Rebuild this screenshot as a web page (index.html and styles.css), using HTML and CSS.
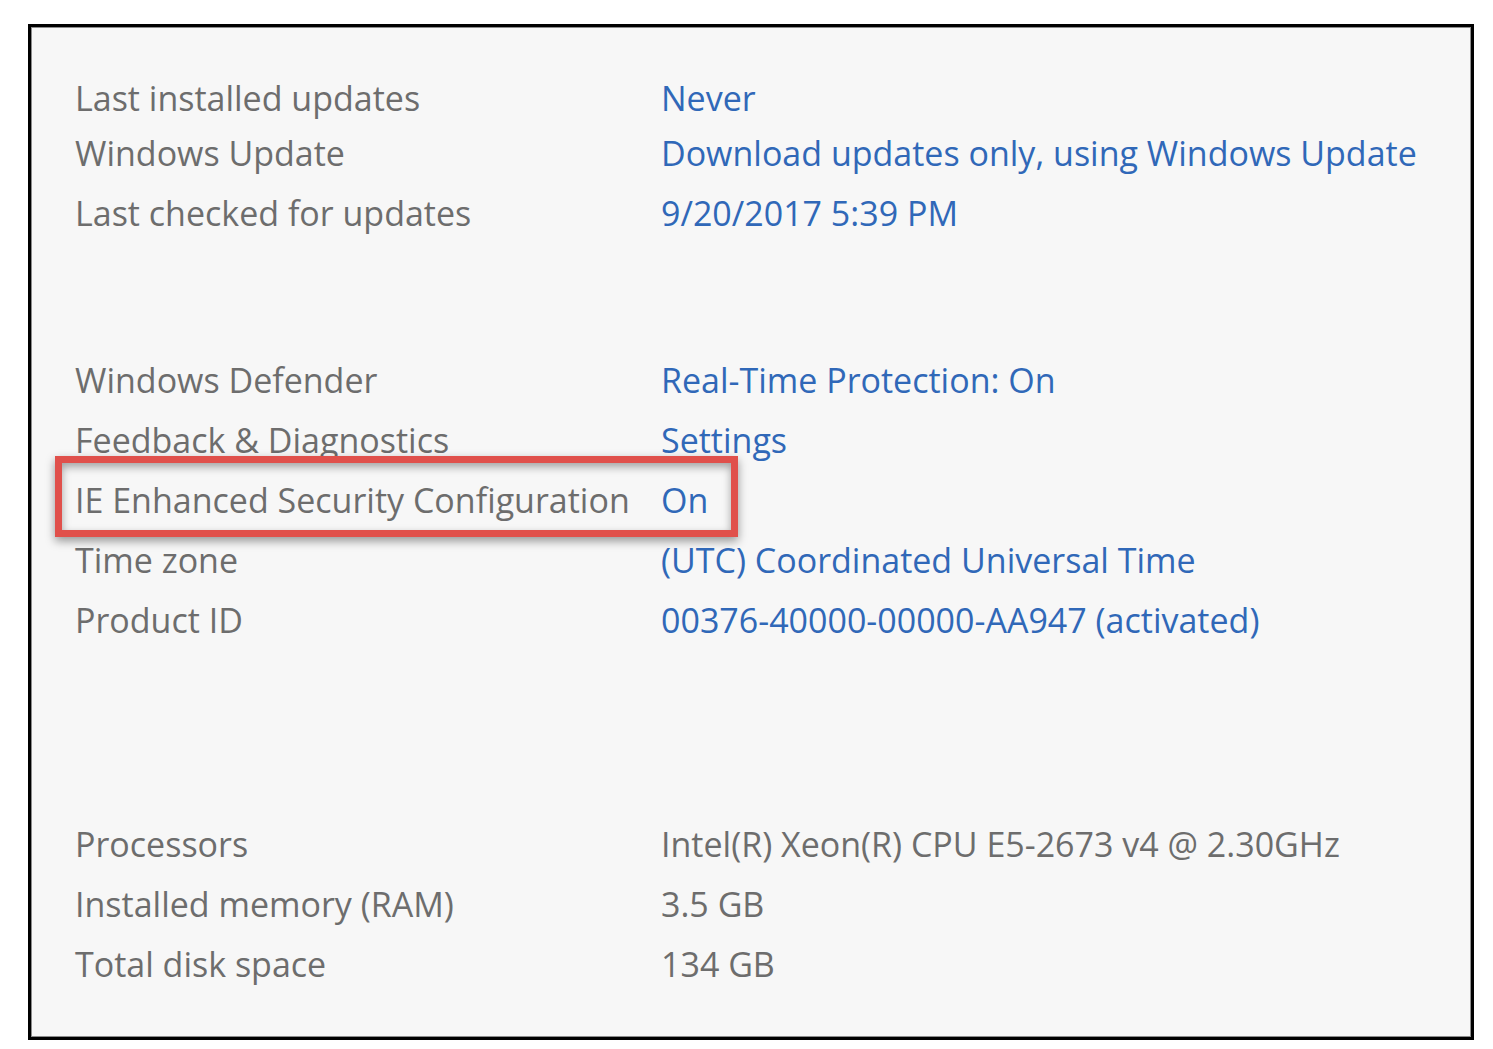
FILE: index.html
```html
<!DOCTYPE html>
<html>
<head>
<meta charset="utf-8">
<link rel="stylesheet" href="styles.css">
</head>
<body>
<div class="panel">
  <div class="group group-updates">
    <div class="row row-first"><span class="label">Last installed updates</span><span class="value link">Never</span></div>
    <div class="row"><span class="label">Windows Update</span><span class="value link">Download updates only, using Windows Update</span></div>
    <div class="row"><span class="label">Last checked for updates</span><span class="value link">9/20/2017 5:39 PM</span></div>
  </div>
  <div class="group group-security">
    <div class="row"><span class="label">Windows Defender</span><span class="value link">Real-Time Protection: On</span></div>
    <div class="row"><span class="label">Feedback &amp; Diagnostics</span><span class="value link">Settings</span></div>
    <div class="row row-highlight"><span class="highlight"></span><span class="label">IE Enhanced Security Configuration</span><span class="value link">On</span></div>
    <div class="row"><span class="label">Time zone</span><span class="value link">(UTC) Coordinated Universal Time</span></div>
    <div class="row"><span class="label">Product ID</span><span class="value link">00376-40000-00000-AA947 (activated)</span></div>
  </div>
  <div class="group group-hardware">
    <div class="row"><span class="label">Processors</span><span class="value">Intel(R) Xeon(R) CPU E5-2673 v4 @ 2.30GHz</span></div>
    <div class="row"><span class="label">Installed memory (RAM)</span><span class="value">3.5 GB</span></div>
    <div class="row"><span class="label">Total disk space</span><span class="value">134 GB</span></div>
  </div>
</div>
</body>
</html>
```

FILE: styles.css
```css
html, body {
  margin: 0;
  padding: 0;
  background: #ffffff;
}
body {
  padding: 24px 0 0 28px;
  font-family: "Open Sans", "Noto Sans", sans-serif;
}
.panel {
  box-sizing: border-box;
  width: 1446px;
  height: 1016px;
  border: 3px solid #000;
  box-shadow: inset 0 0 0 1px #8c8c8c;
  background: #f7f7f7;
  padding: 41px 0 0 44px;
  display: flex;
  flex-direction: column;
}
.group-security { margin-top: 107px; }
.group-hardware { margin-top: 164px; }
.row {
  display: grid;
  grid-template-columns: 586px auto;
  height: 60px;
  line-height: 60px;
  font-size: 34px;
  letter-spacing: 0;
  color: #6d6d6d;
  white-space: nowrap;
  position: relative;
}
.row-first { height: 55px; }
.link { color: #3068b8; }
.highlight {
  position: absolute;
  left: -20px;
  top: -14px;
  width: 683px;
  height: 81px;
  box-sizing: border-box;
  border: 7px solid #e0504b;
  box-shadow: 0 4px 9px rgba(0,0,0,0.4), inset 0 4px 9px rgba(0,0,0,0.35);
}
```
